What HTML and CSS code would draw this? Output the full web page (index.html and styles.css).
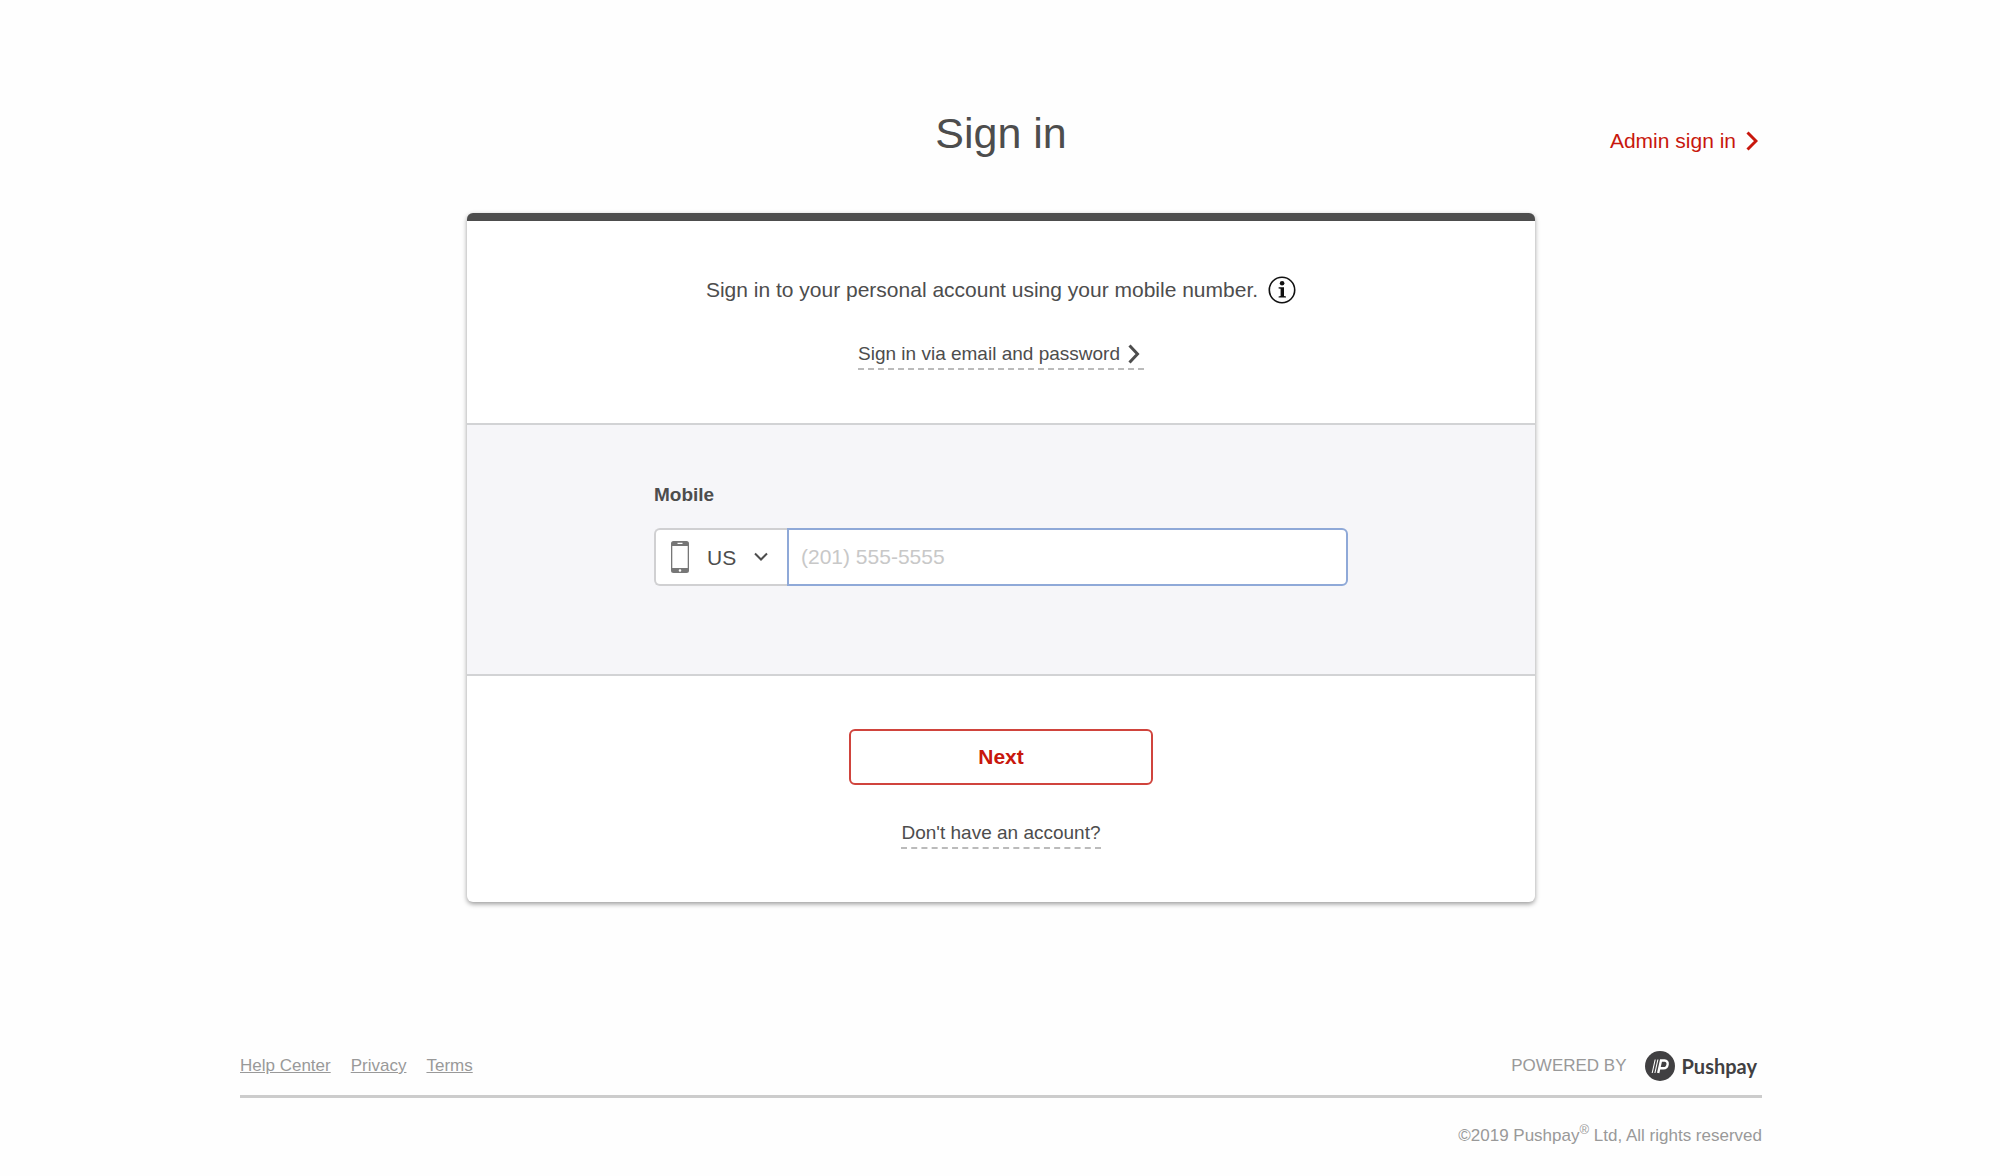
FILE: index.html
```html
<!DOCTYPE html>
<html lang="en">
<head>
<meta charset="utf-8">
<meta name="viewport" content="width=device-width, initial-scale=1">
<title>Sign in</title>
<link rel="stylesheet" href="styles.css">
</head>
<body>
<header class="header">
  <h1 class="title">Sign in</h1>
  <a class="admin" href="#">Admin sign in
    <svg class="chevron" viewBox="0 0 12 20" aria-hidden="true"><path d="M1.5 1.5L10 10L1.5 18.5"/></svg></a>
</header>
<main>
  <form class="card">
    <div class="intro">
      <p class="lead">Sign in to your personal account using your mobile number.
        <svg class="info" viewBox="0 0 28 28" role="img" aria-label="Information"><circle cx="14" cy="14" r="12.7" fill="none" stroke="#111" stroke-width="1.6"/><circle cx="14.1" cy="7.3" r="2.3" fill="#111"/><path fill="#111" d="M10.6 11.2h5.400v8.800l2 .4v1.200h-7.400v-1.200l2-.4v-7.200l-2-.4z"/></svg></p>
      <a class="alt alt-email" href="#">Sign in via email and password
        <svg class="chevron" viewBox="0 0 12 20" aria-hidden="true"><path d="M1.5 1.5L9.5 10L1.5 18.5"/></svg></a>
    </div>
    <div class="fields">
      <div class="fields-inner">
        <label class="label" for="mobile">Mobile</label>
        <div class="group">
          <div class="country">
            <svg class="phone" viewBox="0 0 18 32" aria-hidden="true"><path fill="#777" fill-rule="evenodd" d="M2.500 0h13a2.500 2.500 0 0 1 2.500 2.500v27a2.500 2.500 0 0 1-2.500 2.500h-13a2.500 2.500 0 0 1-2.500-2.500v-27a2.500 2.500 0 0 1 2.500-2.500zM1.300 5v22h15.400v-22zM6.500 1.800v1.300h5v-1.300zM9 28.200a1.300 1.300 0 1 0 0 2.600a1.300 1.300 0 0 0 0-2.600z"/></svg>
            <select class="select" aria-label="Country"><option>US</option><option>NZ</option><option>AU</option></select>
            <svg class="down" viewBox="0 0 14 10" aria-hidden="true"><path d="M1 1.500L7 7.500L13 1.500"/></svg>
          </div>
          <input class="number" id="mobile" type="tel" placeholder="(201) 555-5555">
        </div>
      </div>
    </div>
    <div class="actions">
      <button class="next" type="button">Next</button>
      <a class="alt" href="#">Don't have an account?</a>
    </div>
  </form>
</main>
<footer class="footer">
  <div class="footer-row">
    <nav class="links"><a href="#">Help Center</a><a href="#">Privacy</a><a href="#">Terms</a></nav>
    <div class="powered">POWERED BY
      <a class="brand" href="#"><svg class="mark" viewBox="0 0 30 30" aria-hidden="true"><circle cx="15" cy="15" r="15" fill="#414042"/><g fill="none" stroke="#fff"><path stroke-width="1.100" d="M7.200 22L10.200 8.500M9.900 22L12.900 8.500"/><path stroke-width="2.400" d="M13.200 22L16 9.500H19.600C24.300 9.500 23.400 17.300 18.400 17.300H14.500"/></g></svg>Pushpay</a>
    </div>
  </div>
  <p class="copyright">©2019 Pushpay<sup>®</sup> Ltd, All rights reserved</p>
</footer>
</body>
</html>
```
FILE: styles.css
```css
* {
  box-sizing: border-box;
}

body {
  margin: 0;
  padding: 0 24px 0 26px;
  background: #fefefe;
  color: #4d4d4d;
  font-family: "Liberation Sans", Arial, sans-serif;
  font-size: 21px;
}

a {
  color: inherit;
  text-decoration: none;
}

.header,
.footer {
  max-width: 1522px;
  margin: 0 auto;
}

.header {
  display: grid;
  grid-template-columns: 1fr auto 1fr;
  align-items: center;
  padding-top: 108px;
}

.title {
  grid-column: 2;
  margin: 0;
  font-size: 43px;
  font-weight: 400;
  line-height: 50px;
}

.admin {
  display: flex;
  align-items: center;
  justify-self: end;
  gap: 10px;
  padding: 16px 4px 0 0;
  color: #c8170d;
  line-height: 24px;
}

.chevron {
  width: 12px;
  height: 20px;
  fill: none;
  stroke: currentColor;
  stroke-width: 3;
}

.card {
  max-width: 1068px;
  margin: 55px auto 0;
  border-top: 8px solid #4d4d4d;
  border-radius: 6px;
  background: #fff;
  box-shadow: 0 2px 5px rgba(0, 0, 0, 0.4);
}

.intro,
.actions {
  display: flex;
  flex-direction: column;
  align-items: center;
}

.intro {
  gap: 36px;
  padding: 54px 24px 53px;
}

.lead {
  display: flex;
  align-items: center;
  gap: 10px;
  margin: 0;
  line-height: 30px;
}

.info {
  flex: none;
  width: 28px;
  height: 28px;
}

.alt {
  display: flex;
  align-items: center;
  gap: 8px;
  padding-bottom: 1px;
  border-bottom: 2px dashed #bbb;
  font-size: 19px;
  line-height: 26px;
}

.alt-email {
  padding-right: 4px;
}

.fields {
  padding: 58px 24px 88px;
  border: solid #d2d3d5;
  border-width: 2px 0;
  background: #f6f6f9;
}

.fields-inner {
  max-width: 694px;
  margin: 0 auto;
}

.label {
  display: block;
  margin-bottom: 21px;
  font-size: 19px;
  font-weight: 700;
  line-height: 24px;
}

.group {
  display: flex;
  height: 58px;
}

.country {
  display: grid;
  grid-template-columns: 48px 50px 1fr;
  align-items: center;
  width: 133px;
  border: 2px solid #d0d0d2;
  border-right: 0;
  border-radius: 6px 0 0 6px;
  background: #fff;
}

.phone {
  grid-area: 1 / 1;
  justify-self: center;
  width: 18px;
  height: 32px;
}

.select {
  grid-area: 1 / 1 / 2 / 4;
  width: 100%;
  height: 100%;
  padding: 0 0 0 51px;
  border: 0;
  background: transparent;
  color: inherit;
  font: inherit;
  appearance: none;
}

.down {
  grid-area: 1 / 3;
  width: 14px;
  height: 10px;
  fill: none;
  stroke: #4d4d4d;
  stroke-width: 2;
  pointer-events: none;
}

.number {
  flex: 1;
  min-width: 0;
  padding: 0 12px;
  border: 2px solid #8fa9d8;
  border-radius: 0 6px 6px 0;
  outline: 0;
  background: #fff;
  color: inherit;
  font: inherit;
}

.number::placeholder {
  color: #c8c8c8;
}

.actions {
  gap: 35px;
  padding: 53px 24px;
}

.next {
  width: 304px;
  max-width: 100%;
  height: 56px;
  padding: 0;
  border: 2px solid #d0443d;
  border-radius: 6px;
  background: #fff;
  color: #c8170d;
  font: 700 21px "Liberation Sans", Arial, sans-serif;
}

.footer {
  padding: 147px 0 24px;
  color: #999;
  font-size: 17px;
}

.footer-row {
  display: flex;
  flex-wrap: wrap;
  align-items: center;
  justify-content: space-between;
  padding-bottom: 12px;
  border-bottom: 3px solid #ccc;
}

.links {
  display: flex;
  gap: 20px;
}

.links a {
  text-decoration: underline;
}

.powered {
  display: flex;
  align-items: center;
  gap: 18px;
  padding-right: 5px;
}

.brand {
  display: flex;
  align-items: center;
  gap: 7px;
  color: #414042;
  font: 700 20px/34px Lato, sans-serif;
}

.mark {
  width: 30px;
  height: 30px;
}

.copyright {
  margin: 26px 0 0;
  line-height: 24px;
  text-align: right;
}

.copyright sup {
  font-size: 13px;
  line-height: 0;
}
```
